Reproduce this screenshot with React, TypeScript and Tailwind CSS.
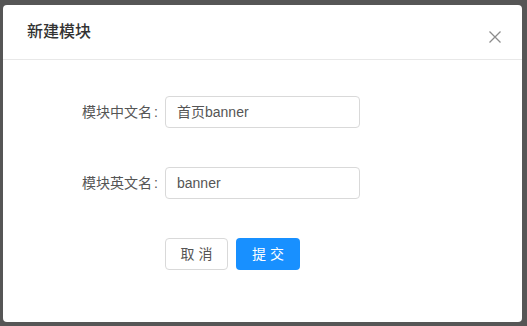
import React from 'react';

const FormRow: React.FC<{ label: string; value: string }> = ({ label, value }) => (
  <div className="flex items-center">
    <label className="w-[162px] shrink-0 text-right text-[14px] text-[#555] pr-[7px]">
      {label}
      <span className="ml-[2px]">:</span>
    </label>
    <div className="w-[195px] h-[32px] border border-[#d9d9d9] rounded-[4px] flex items-center px-[11px] text-[14px] text-[#555]">
      {value}
    </div>
  </div>
);

export default function App() {
  return (
    <div
      className="w-[527px] h-[326px] bg-[#565656] pt-[5px] pl-[3px]"
      style={{ fontFamily: '"Liberation Sans", "Noto Sans CJK SC", sans-serif' }}
    >
      <div className="w-[519px] h-[317px] bg-white rounded-[4px] flex flex-col">
        <div className="h-[55px] border-b border-[#e8e8e8] flex items-center justify-between pl-[24px] pr-[20px] shrink-0">
          <span className="text-[16px] text-[#333] font-medium">新建模块</span>
          <svg width="14" height="14" viewBox="0 0 14 14" className="mt-[9px]">
            <path d="M1.5 1.5 L12.5 12.5 M12.5 1.5 L1.5 12.5" stroke="#8c8c8c" strokeWidth="1.3" fill="none" />
          </svg>
        </div>
        <div className="flex flex-col pt-[36px]">
          <FormRow label="模块中文名" value="首页banner" />
          <div className="h-[39px]" />
          <FormRow label="模块英文名" value="banner" />
          <div className="flex gap-[8px] pl-[162px] pt-[39px]">
            <button className="w-[63px] h-[32px] border border-[#d9d9d9] rounded-[4px] bg-white text-[14px] text-[#555] tracking-[4px] pl-[4px]">
              取消
            </button>
            <button className="w-[64px] h-[32px] rounded-[4px] bg-[#1890ff] text-[14px] text-white tracking-[4px] pl-[4px]">
              提交
            </button>
          </div>
        </div>
      </div>
    </div>
  );
}
